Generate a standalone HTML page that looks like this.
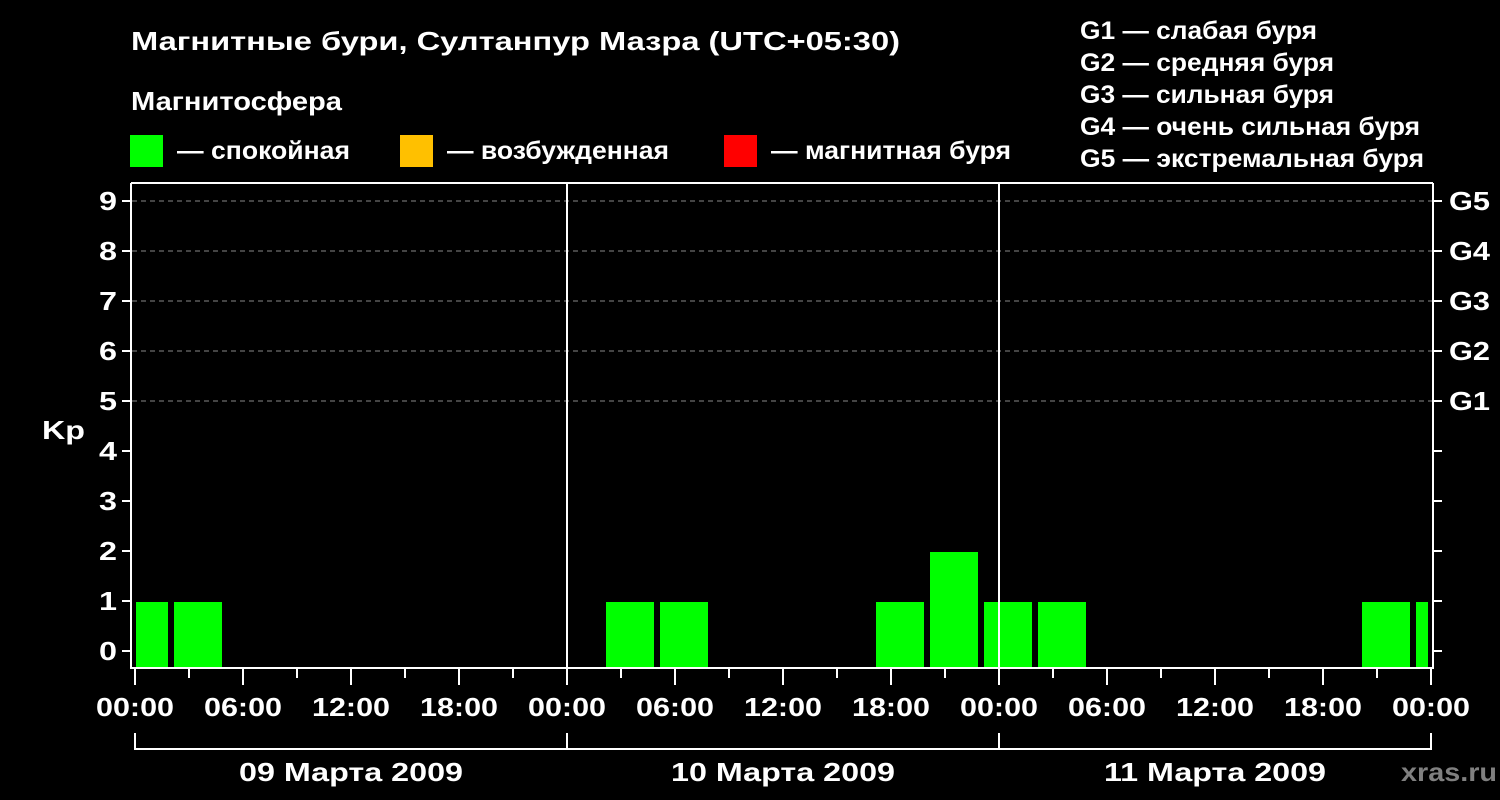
<!DOCTYPE html>
<html><head><meta charset="utf-8"><style>html,body{margin:0;padding:0;background:#000;width:1500px;height:800px;overflow:hidden}</style></head>
<body>
<svg width="1500" height="800" xmlns="http://www.w3.org/2000/svg" font-family="Liberation Sans, DejaVu Sans, sans-serif" font-weight="bold" fill="#fff">
<rect width="1500" height="800" fill="#000"/>
<text x="131" y="50" font-size="26" textLength="769" lengthAdjust="spacingAndGlyphs">Магнитные бури, Султанпур Мазра (UTC+05:30)</text>
<text x="131" y="110" font-size="26" textLength="211" lengthAdjust="spacingAndGlyphs">Магнитосфера</text>
<rect x="130" y="135" width="33" height="32" fill="#00ff00"/>
<text x="177" y="159" font-size="25" textLength="173" lengthAdjust="spacingAndGlyphs">— спокойная</text>
<rect x="400" y="135" width="33" height="32" fill="#ffc000"/>
<text x="447" y="159" font-size="25" textLength="222" lengthAdjust="spacingAndGlyphs">— возбужденная</text>
<rect x="724" y="135" width="33" height="32" fill="#ff0000"/>
<text x="771" y="159" font-size="25" textLength="240" lengthAdjust="spacingAndGlyphs">— магнитная буря</text>
<g font-size="25">
<text x="1080" y="39" textLength="237" lengthAdjust="spacingAndGlyphs">G1 — слабая буря</text>
<text x="1080" y="71" textLength="254" lengthAdjust="spacingAndGlyphs">G2 — средняя буря</text>
<text x="1080" y="103" textLength="254" lengthAdjust="spacingAndGlyphs">G3 — сильная буря</text>
<text x="1080" y="135" textLength="340" lengthAdjust="spacingAndGlyphs">G4 — очень сильная буря</text>
<text x="1080" y="167" textLength="344" lengthAdjust="spacingAndGlyphs">G5 — экстремальная буря</text>
</g>
<g stroke="#888" stroke-width="1" stroke-dasharray="5,4">
<line x1="132" y1="201" x2="1432" y2="201"/><line x1="132" y1="251" x2="1432" y2="251"/><line x1="132" y1="301" x2="1432" y2="301"/><line x1="132" y1="351" x2="1432" y2="351"/><line x1="132" y1="401" x2="1432" y2="401"/>
</g>
<g fill="#00ff00">
<rect x="136" y="602" width="32" height="66"/><rect x="174" y="602" width="48" height="66"/>
<rect x="606" y="602" width="48" height="66"/><rect x="660" y="602" width="48" height="66"/>
<rect x="876" y="602" width="48" height="66"/><rect x="930" y="552" width="48" height="116"/>
<rect x="984" y="602" width="48" height="66"/><rect x="1038" y="602" width="48" height="66"/>
<rect x="1362" y="602" width="48" height="66"/><rect x="1416" y="602" width="12" height="66"/>
</g>
<g stroke="#fff" stroke-width="2" fill="none">
<path d="M131 183H1433M131 183V668H1433V183"/>
<line x1="567" y1="183" x2="567" y2="668"/><line x1="999" y1="183" x2="999" y2="668"/>
<path d="M122 201h9M122 251h9M122 301h9M122 351h9M122 401h9M122 451h9M122 501h9M122 551h9M122 601h9M122 651h9"/>
<path d="M1433 201h9M1433 251h9M1433 301h9M1433 351h9M1433 401h9M1433 451h9M1433 501h9M1433 551h9M1433 601h9M1433 651h9"/>
<path d="M135 668v17M189 668v10M243 668v17M297 668v10M351 668v17M405 668v10M459 668v17M513 668v10M567 668v17M621 668v10M675 668v17M729 668v10M783 668v17M837 668v10M891 668v17M945 668v10M999 668v17M1053 668v10M1107 668v17M1161 668v10M1215 668v17M1269 668v10M1323 668v17M1377 668v10M1431 668v17"/>
<path d="M135 733V749H1431V733M567 733V749M999 733V749"/>
</g>
<g font-size="26" text-anchor="end">
<text x="117" y="210" textLength="18" lengthAdjust="spacingAndGlyphs">9</text><text x="117" y="260" textLength="18" lengthAdjust="spacingAndGlyphs">8</text><text x="117" y="310" textLength="18" lengthAdjust="spacingAndGlyphs">7</text><text x="117" y="360" textLength="18" lengthAdjust="spacingAndGlyphs">6</text><text x="117" y="410" textLength="18" lengthAdjust="spacingAndGlyphs">5</text><text x="117" y="460" textLength="18" lengthAdjust="spacingAndGlyphs">4</text><text x="117" y="510" textLength="18" lengthAdjust="spacingAndGlyphs">3</text><text x="117" y="560" textLength="18" lengthAdjust="spacingAndGlyphs">2</text><text x="117" y="610" textLength="18" lengthAdjust="spacingAndGlyphs">1</text><text x="117" y="660" textLength="18" lengthAdjust="spacingAndGlyphs">0</text>
</g>
<text x="42" y="439" font-size="26" textLength="43" lengthAdjust="spacingAndGlyphs">Kp</text>
<g font-size="26">
<text x="1449" y="210" textLength="41" lengthAdjust="spacingAndGlyphs">G5</text><text x="1449" y="260" textLength="41" lengthAdjust="spacingAndGlyphs">G4</text><text x="1449" y="310" textLength="41" lengthAdjust="spacingAndGlyphs">G3</text><text x="1449" y="360" textLength="41" lengthAdjust="spacingAndGlyphs">G2</text><text x="1449" y="410" textLength="41" lengthAdjust="spacingAndGlyphs">G1</text>
</g>
<g font-size="26">
<text x="96" y="716" textLength="78" lengthAdjust="spacingAndGlyphs">00:00</text><text x="204" y="716" textLength="78" lengthAdjust="spacingAndGlyphs">06:00</text><text x="312" y="716" textLength="78" lengthAdjust="spacingAndGlyphs">12:00</text><text x="420" y="716" textLength="78" lengthAdjust="spacingAndGlyphs">18:00</text>
<text x="528" y="716" textLength="78" lengthAdjust="spacingAndGlyphs">00:00</text><text x="636" y="716" textLength="78" lengthAdjust="spacingAndGlyphs">06:00</text><text x="744" y="716" textLength="78" lengthAdjust="spacingAndGlyphs">12:00</text><text x="852" y="716" textLength="78" lengthAdjust="spacingAndGlyphs">18:00</text>
<text x="960" y="716" textLength="78" lengthAdjust="spacingAndGlyphs">00:00</text><text x="1068" y="716" textLength="78" lengthAdjust="spacingAndGlyphs">06:00</text><text x="1176" y="716" textLength="78" lengthAdjust="spacingAndGlyphs">12:00</text><text x="1284" y="716" textLength="78" lengthAdjust="spacingAndGlyphs">18:00</text>
<text x="1392" y="716" textLength="78" lengthAdjust="spacingAndGlyphs">00:00</text>
<text x="239" y="781" textLength="224" lengthAdjust="spacingAndGlyphs">09 Марта 2009</text><text x="671" y="781" textLength="224" lengthAdjust="spacingAndGlyphs">10 Марта 2009</text><text x="1104" y="781" textLength="222" lengthAdjust="spacingAndGlyphs">11 Марта 2009</text>
</g>
<text x="1401" y="781" font-size="26" fill="#808080" textLength="96" lengthAdjust="spacingAndGlyphs">xras.ru</text>
</svg>
</body></html>
